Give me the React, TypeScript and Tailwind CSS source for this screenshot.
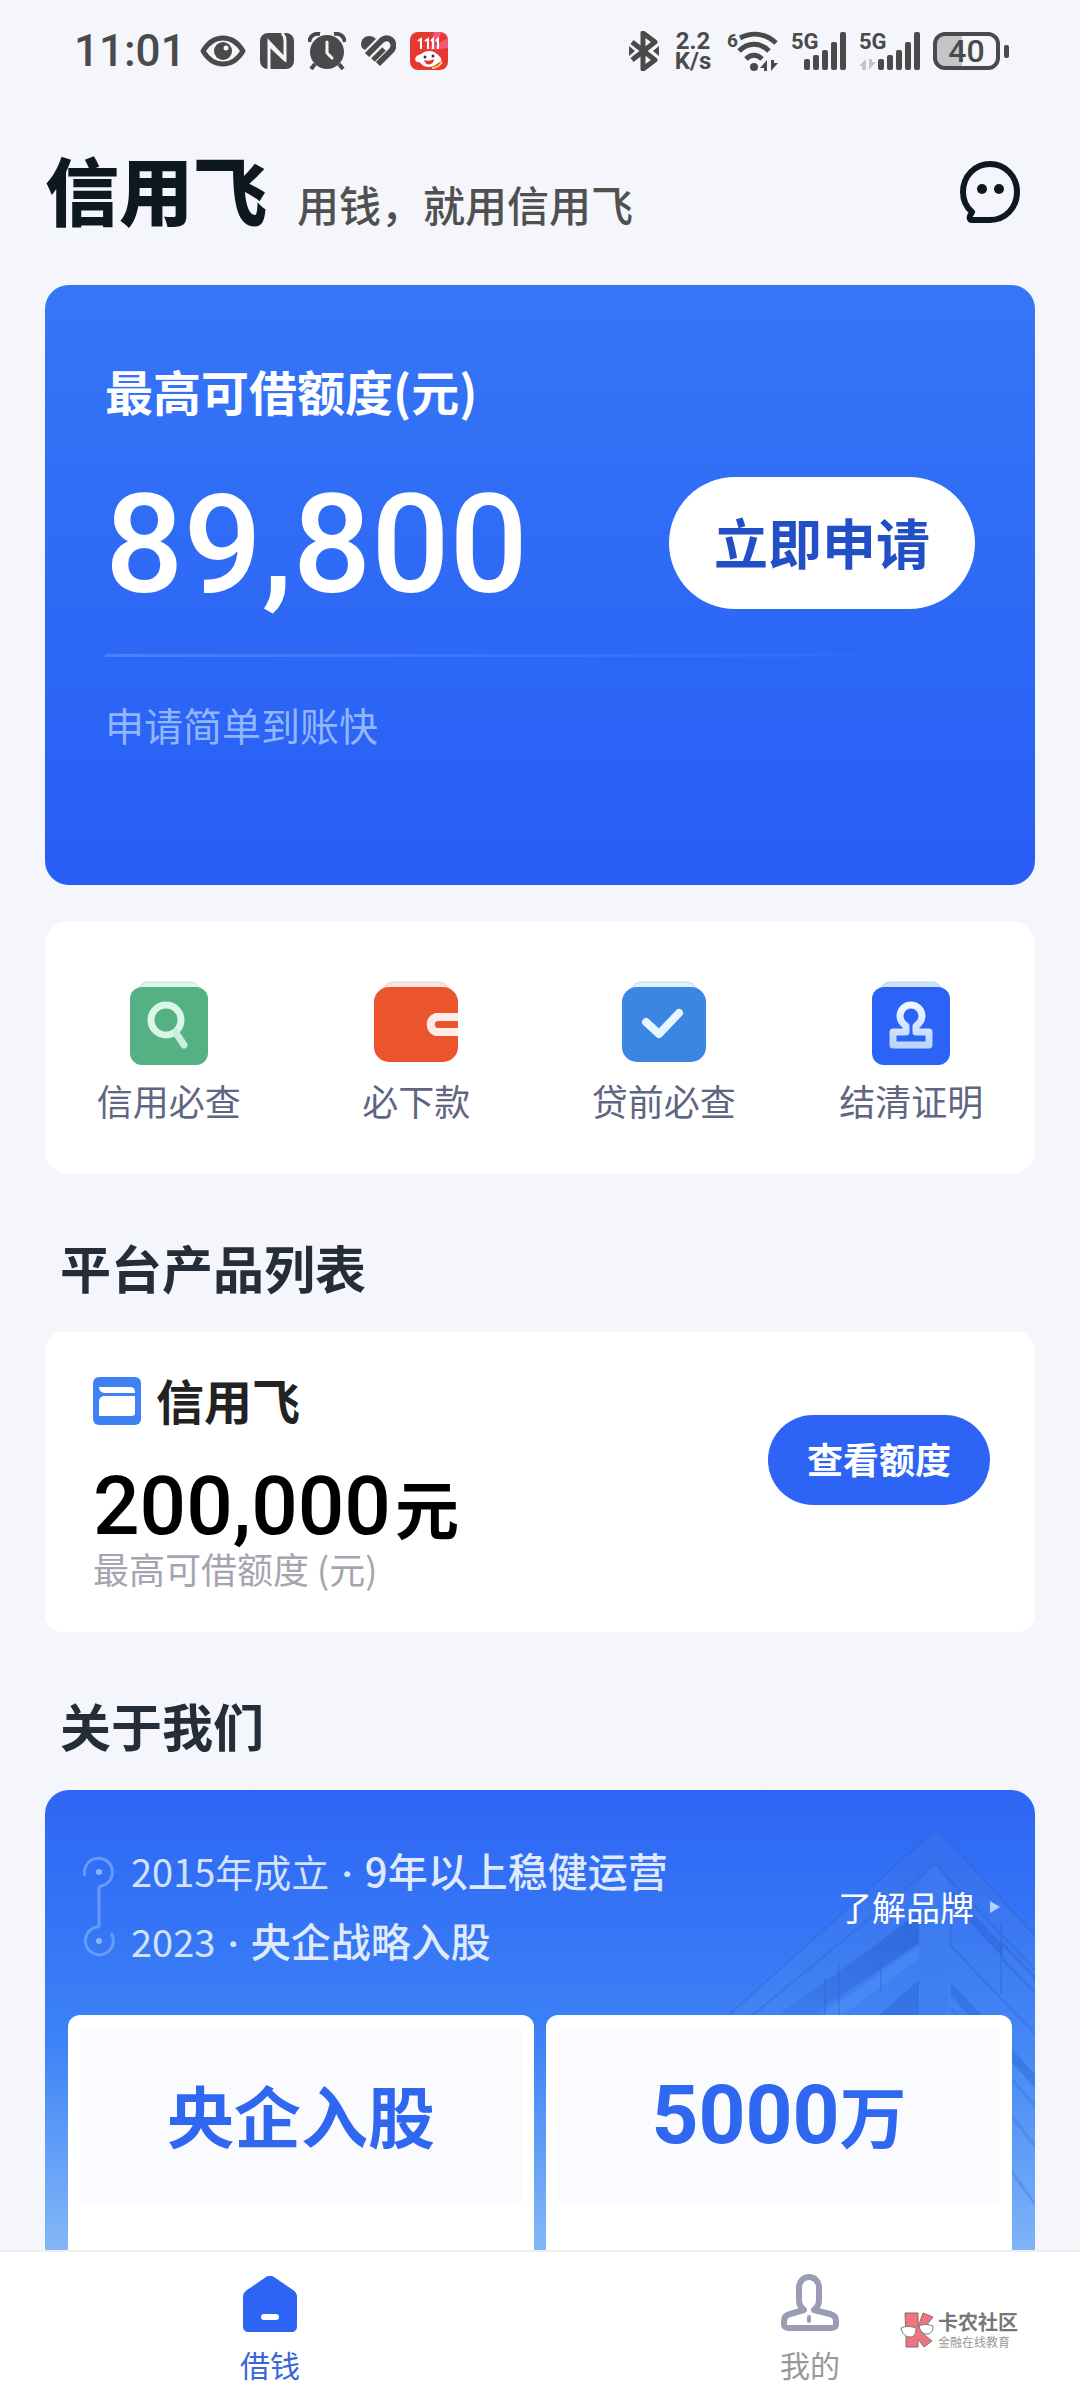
import React from 'react';

type IconProps = { className?: string };

/* ---------- status bar ---------- */

function EyeIcon() {
  return (
    <svg width="46" height="34" viewBox="0 0 46 34" aria-hidden="true">
      <path d="M3 17C9 7 16 4 23 4s14 3 20 13c-6 10-13 13-20 13S9 27 3 17Z" fill="none" stroke="#4a4a4a" strokeWidth="5" strokeLinejoin="round" />
      <circle cx="23" cy="17" r="9" fill="#4a4a4a" />
      <circle cx="26" cy="14" r="2.5" fill="#f4f6fb" />
    </svg>
  );
}

function NfcIcon() {
  return (
    <svg width="34" height="36" viewBox="0 0 34 36" aria-hidden="true">
      <rect width="34" height="36" rx="8" fill="#4a4a4a" />
      <path d="M9 36V9l16 17V8c0-4-1-6-3-8" fill="none" stroke="#f4f6fb" strokeWidth="3" />
      <path d="M9 9 25 26v3L9 14Z" fill="#f4f6fb" />
    </svg>
  );
}

function AlarmIcon() {
  return (
    <svg width="38" height="38" viewBox="0 0 38 38" aria-hidden="true">
      <circle cx="19" cy="20" r="17" fill="#4a4a4a" />
      <path d="M1 10C2 4 6 1 12 2M37 10c-1-6-5-9-11-8" fill="none" stroke="#4a4a4a" strokeWidth="4" />
      <path d="m7 32-4 5M31 32l4 5" stroke="#4a4a4a" strokeWidth="4" />
      <path d="M19 10v11l5 5" fill="none" stroke="#f4f6fb" strokeWidth="3" strokeLinecap="round" />
    </svg>
  );
}

function HealthIcon() {
  return (
    <svg width="36" height="32" viewBox="0 0 36 32" aria-hidden="true">
      <path d="M2 13C-1 6 4 1 9 1c3 0 5 1 7 3L5 15Z" fill="#4a4a4a" />
      <path d="M7 20 21 6c4-4 9-3 11 0s2 7-1 10L18 29" fill="none" stroke="#4a4a4a" strokeWidth="6" />
      <path d="M13 25 24 14" stroke="#4a4a4a" strokeWidth="5" />
    </svg>
  );
}

function ShopIcon() {
  return (
    <svg width="38" height="38" viewBox="0 0 38 38" aria-hidden="true">
      <rect width="38" height="38" rx="8" fill="#e5392f" />
      <path d="M24 0h8l-8 14 14-8v10L20 18Z" fill="#f2597c" />
      <path d="M8 9l3-2v10M15 9l3-2v10M21 9l2-2v10M26 9l2-2v10" fill="none" stroke="#fff" strokeWidth="2" />
      <path d="M11 22c5-4 12-4 16 0 4 3 6 7 3 8-3 1-5 5-11 5s-7-3-10-5c-3 1-5-3-3-5 1-2 3-2 5-3Z" fill="#fff" />
      <path d="M14 28c4 1 7 1 10-1 0 6-8 8-10 1Z" fill="#d33" />
      <circle cx="15" cy="25" r="1.500" fill="#333" />
      <circle cx="23" cy="24" r="1.500" fill="#333" />
      <path d="M22 36c5 0 8-3 10-6" stroke="#f7d774" strokeWidth="2" fill="none" />
    </svg>
  );
}

function BluetoothIcon() {
  return (
    <svg width="30" height="40" viewBox="0 0 30 40" aria-hidden="true">
      <path d="m3 11 23 18-12 9V2l12 9L3 29" fill="none" stroke="#4a4a4a" strokeWidth="5" strokeLinejoin="round" />
      <path d="m0 15 6 5-6 5ZM30 15l-6 5 6 5Z" fill="#4a4a4a" />
    </svg>
  );
}

function WifiIcon() {
  return (
    <svg width="52" height="42" viewBox="0 0 52 42" aria-hidden="true">
      <text x="0" y="17" fontSize="19" fontWeight="700" fontFamily="Roboto, sans-serif" fill="#4a4a4a">6</text>
      <g fill="none" stroke="#4a4a4a" strokeWidth="5">
        <path d="M13 8c12-6 25-5 36 5" />
        <path d="M12 21c9-9 21-9 30 0" />
        <path d="M19 29c5-5 11-5 16 0" />
      </g>
      <circle cx="27" cy="37" r="4" fill="#4a4a4a" />
      <path d="M40 41V30l-7 8h4v3ZM44 30v11l7-8h-4v-3Z" fill="#4a4a4a" />
    </svg>
  );
}

function SignalIcon({ idle }: { idle?: boolean }) {
  const first = idle ? 19 : 13;
  return (
    <svg width={idle ? 62 : 56} height="48" viewBox={idle ? '0 -4 62 48' : '0 -4 56 48'} aria-hidden="true">
      <text x="0" y="18" fontSize="22" fontWeight="700" fontFamily="Roboto, sans-serif" fill="#4a4a4a">5G</text>
      {[27, 23, 18, 10, 0].map((y, i) => (
        <rect key={y} x={first + i * 9} y={y + 1} width="6" height={38 - y} rx="2" fill="#4a4a4a" />
      ))}
      {idle && <path d="M7 39V28l-7 7h3v4ZM10 28v11l7-8h-4v-3Z" fill="#c4c5c9" />}
    </svg>
  );
}

function Battery() {
  return (
    <div className="flex items-center gap-1">
      <div className="flex h-[38px] w-[67px] items-center justify-center rounded-[12px] border-[4px] border-[#4a4a4a] bg-linear-to-r from-[#c4c5c8] from-42% to-[#f4f6fb] to-42% text-[32px] leading-[32px] font-medium">
        40
      </div>
      <div className="h-[13px] w-[5px] rounded-[2px] bg-[#4a4a4a]" />
    </div>
  );
}

function StatusBar() {
  return (
    <div className="flex h-[102px] shrink-0 items-center justify-between pr-[71px] pl-[74px] font-[Roboto] text-[#4a4a4a]">
      <div className="flex items-center gap-[14px]">
        <span className="text-[44px] leading-[44px] font-medium">11:01</span>
        <EyeIcon />
        <NfcIcon />
        <AlarmIcon />
        <HealthIcon />
        <ShopIcon />
      </div>
      <div className="flex items-center gap-3">
        <BluetoothIcon />
        <div className="w-[44px] text-center text-[24px] leading-[20px] font-bold">
          <div>2.2</div>
          <div>K/s</div>
        </div>
        <WifiIcon />
        <SignalIcon />
        <SignalIcon idle />
        <Battery />
      </div>
    </div>
  );
}

/* ---------- page icons ---------- */

function ChatIcon() {
  return (
    <svg width="60" height="62" viewBox="0 0 60 62" aria-hidden="true">
      <path d="M12 51C5 45 3 38 3 31 3 15 15 3 30 3s27 12 27 28-12 28-27 28H12c-3 0-3-4-1-6" fill="none" stroke="#0e1820" strokeWidth="6" strokeLinecap="round" strokeLinejoin="round" />
      <circle cx="22" cy="28" r="5" fill="#0e1820" />
      <circle cx="39" cy="28" r="5" fill="#0e1820" />
    </svg>
  );
}

function SearchTile() {
  return (
    <svg width="84" height="84" viewBox="0 0 84 84" aria-hidden="true">
      <path d="M12 7c2-4 5-6 9-6h42c4 0 7 2 9 6" fill="#e0f6ec" stroke="#bfe3d2" />
      <rect x="3" y="6" width="78" height="78" rx="12" fill="#54b183" />
      <circle cx="39" cy="39" r="15" fill="none" stroke="#d8f7e7" strokeWidth="7" />
      <path d="m49 52 8 12" stroke="#c6f0da" strokeWidth="7" strokeLinecap="round" />
    </svg>
  );
}

function WalletTile() {
  return (
    <svg width="84" height="84" viewBox="0 0 84 84" aria-hidden="true">
      <path d="M10 7c2-4 5-6 9-6h46c4 0 7 2 9 6" fill="#fde6df" stroke="#e9cfd0" />
      <rect y="6" width="84" height="75" rx="15" fill="#eb552e" />
      <path d="M84 36H62a8 8 0 0 0 0 15h22" fill="none" stroke="#fdebe6" strokeWidth="8" />
    </svg>
  );
}

function CheckTile() {
  return (
    <svg width="84" height="84" viewBox="0 0 84 84" aria-hidden="true">
      <path d="M10 7c2-4 5-6 9-6h46c4 0 7 2 9 6" fill="#e0f1fb" stroke="#bcd9ea" />
      <rect y="6" width="84" height="75" rx="15" fill="#3a86e2" />
      <path d="m24 41 13 12 20-21" fill="none" stroke="#e6f6ff" strokeWidth="8" strokeLinecap="round" strokeLinejoin="round" />
    </svg>
  );
}

function StampTile() {
  return (
    <svg width="84" height="84" viewBox="0 0 84 84" aria-hidden="true">
      <defs>
        <linearGradient id="stamp" x1="0" y1="0" x2="0" y2="1">
          <stop offset="0" stopColor="#eef7ff" />
          <stop offset="1" stopColor="#b9d6fd" />
        </linearGradient>
      </defs>
      <path d="M12 7c2-4 5-6 9-6h42c4 0 7 2 9 6" fill="#cfe2fb" stroke="#bcd0ea" />
      <rect x="3" y="6" width="78" height="78" rx="12" fill="#2a63f6" />
      <path d="M37 51v-6c-4-3-6-6-6-10a11 11 0 0 1 22 0c0 4-2 7-6 10v6h13v13H24V51Z" fill="none" stroke="url(#stamp)" strokeWidth="7" strokeLinejoin="round" />
    </svg>
  );
}

function ProductIcon() {
  return (
    <svg width="48" height="48" viewBox="0 0 48 48" aria-hidden="true">
      <rect width="48" height="48" rx="6" fill="#4080f5" />
      <path d="M6 10h31c4 0 5 2 5 6H12c-4 0-6-3-6-6Z" fill="#fff" />
      <path d="M12 19h30v17c0 2-1 3-3 3H6V25c0-4 2-6 6-6Z" fill="#fff" />
    </svg>
  );
}

function TimelineIcon() {
  return (
    <svg width="32" height="102" viewBox="0 0 32 102" aria-hidden="true">
      <path d="M2 20A14 14 0 1 1 18 30q-2 0-2 3v35q0 3-2 3A14 14 0 1 0 28 77" fill="none" stroke="#669bfb" strokeWidth="3" />
      <circle cx="16" cy="16" r="3" fill="#8fb5fc" />
      <circle cx="16" cy="85" r="3" fill="#8fb5fc" />
    </svg>
  );
}

function Building({ className }: IconProps) {
  return (
    <svg className={className} width="306" height="422" viewBox="0 0 306 422" aria-hidden="true">
      <defs>
        <linearGradient id="face" x1="0" y1="0" x2="0" y2="1">
          <stop offset="0" stopColor="#3a6fe6" stopOpacity="0.45" />
          <stop offset="0.5" stopColor="#4a8bf3" stopOpacity="0.5" />
          <stop offset="1" stopColor="#6aa7f7" stopOpacity="0.2" />
        </linearGradient>
        <linearGradient id="beam" x1="0" y1="1" x2="1" y2="0">
          <stop offset="0" stopColor="#265dcb" stopOpacity="0.15" />
          <stop offset="1" stopColor="#265dcb" stopOpacity="0.55" />
        </linearGradient>
      </defs>
      <path d="M208 0 0 187v235h306V108Z" fill="url(#face)" />
      <path d="m190 84-58 44-84 59h36l106-72Z" fill="url(#beam)" />
      <path d="m190 118-98 69h22l76-56Z" fill="#5594fa" fillOpacity="0.4" />
      <path d="m190 152-40 35h40Z" fill="#265dcb" fillOpacity="0.4" />
      <path d="M192 50l14-14 12 14v137h-26Z" fill="#3f7df0" fillOpacity="0.6" />
      <path d="M222 62 306 152v12l-84-90ZM222 154l84 92v14l-84-92ZM274 134l32 32v-18l-32-34Z" fill="#265dcb" fillOpacity="0.35" />
      <path d="m222 180 84 98M222 210l84 108M222 260l84 116" stroke="#2c64d6" strokeOpacity="0.25" strokeWidth="3" />
      <path d="M208 0 0 187M208 0l98 108M206 36 24 187M206 36l100 106M222 118l84 88M110 134v53M152 134v30M96 150v37M272 96v70M222 68v50" fill="none" stroke="#2a60d0" strokeOpacity="0.35" strokeWidth="2" />
    </svg>
  );
}

function HomeIcon() {
  return (
    <svg width="54" height="56" viewBox="0 0 54 56" aria-hidden="true">
      <path d="M23 1c3-2 5-2 8 0l19 13c3 2 4 4 4 7v29c0 4-2 6-6 6H6c-4 0-6-2-6-6V21c0-3 1-5 4-7Z" fill="#2d64f5" />
      <rect x="18" y="38" width="18" height="6" rx="3" fill="#fff" />
    </svg>
  );
}

function PersonIcon() {
  return (
    <svg width="58" height="58" viewBox="0 0 58 58" aria-hidden="true">
      <path d="M23 36c-4-3-5-6-5-10V14C18 7 23 3 28 3s10 4 10 11v12c0 4-1 7-5 10l16 4c4 1 6 3 6 7v3c0 3-2 4-5 4H8c-3 0-5-1-5-4v-3c0-4 2-6 6-7Z" fill="none" stroke="#9a9bb4" strokeWidth="6" strokeLinejoin="round" />
      <path d="M28 43v4" stroke="#9a9bb4" strokeWidth="4" strokeLinecap="round" />
    </svg>
  );
}

function CommunityMark() {
  return (
    <svg width="34" height="36" viewBox="0 0 34 36" aria-hidden="true">
      <path d="M5 1h13v14l5-14 10 4-12 15 11 9-8 6-6-8v8H6V24L5 1Z" fill="#f07481" stroke="#8a6a70" />
      <path d="M1 16c4-2 10-2 15 0 0 6-2 9-6 9s-8-3-9-9ZM19 14c4-2 9-2 14 0 0 6-3 8-6 8s-7-2-8-8Z" fill="#fff" stroke="#777" />
    </svg>
  );
}

/* ---------- page ---------- */

const services = [
  { label: '信用必查', icon: <SearchTile /> },
  { label: '必下款', icon: <WalletTile /> },
  { label: '贷前必查', icon: <CheckTile /> },
  { label: '结清证明', icon: <StampTile /> },
];

function SectionTitle({ children }: { children: React.ReactNode }) {
  return <h2 className="px-[15px] text-[51px] leading-[60px] font-bold text-[#252d38]">{children}</h2>;
}

function Milestone({ when, what }: { when: string; what: string }) {
  return (
    <p className="flex h-[70px] items-baseline gap-3">
      {when}
      <span className="font-[Roboto] font-bold">·</span>
      <strong className="text-[40px] font-medium text-[#dfeafe]">{what}</strong>
    </p>
  );
}

function Highlight({ children }: { children: React.ReactNode }) {
  return (
    <div className="flex flex-1 flex-col rounded-t-[12px] bg-white p-3 pb-0">
      <div className="flex h-[178px] items-center justify-center bg-[#f9fbff] pb-1 text-[67px] leading-[80px] font-bold text-[#2f67f0]">
        <p>{children}</p>
      </div>
    </div>
  );
}

export default function App() {
  return (
    <div className="flex h-screen flex-col bg-[#f4f6fb] font-['Noto_Sans_CJK_SC',sans-serif]">
      <StatusBar />

      <main className="flex min-h-0 flex-1 flex-col overflow-y-auto px-[45px]">
        <header className="flex h-[183px] shrink-0 items-center justify-between pr-[15px] pb-1">
          <div className="flex items-end gap-[30px] pb-2">
            <h1 className="text-[74px] leading-[74px] font-black text-[#0e1820]">信用飞</h1>
            <p className="text-[42px] leading-[42px] font-medium text-[#505050]">用钱，就用信用飞</p>
          </div>
          <button type="button" aria-label="客服">
            <ChatIcon />
          </button>
        </header>

        <section className="h-[600px] shrink-0 rounded-[24px] bg-linear-to-b from-[#3676f6] to-[#285df6] px-[60px] pt-[75px] text-white">
          <h2 className="text-[48px] leading-[60px] font-bold">最高可借额度(元)</h2>
          <div className="mt-[57px] flex items-center justify-between">
            <div className="pt-1 font-[Roboto] text-[138px] leading-[128px] font-medium">89,800</div>
            <button type="button" className="h-[132px] w-[306px] rounded-full bg-white pb-1 text-[54px] font-bold text-[#234fc6]">
              立即申请
            </button>
          </div>
          <div className="mt-[45px] h-[3px] bg-linear-to-r from-[#4a80fb] to-transparent" />
          <p className="mt-[42px] text-[39px] leading-[50px] text-[#92b6fd]">申请简单到账快</p>
        </section>

        <section className="mt-9 grid shrink-0 grid-cols-4 rounded-[24px] bg-white pt-[60px] pb-[49px]">
          {services.map((s) => (
            <button key={s.label} type="button" className="flex flex-col items-center gap-2.5 text-[36px] leading-[50px] text-[#5f6582]">
              {s.icon}
              {s.label}
            </button>
          ))}
        </section>

        <div className="mt-[63px] mb-[35px]">
          <SectionTitle>平台产品列表</SectionTitle>
        </div>
        <section className="flex h-[300px] shrink-0 items-start justify-between rounded-[18px] bg-white pt-[38px] pr-[45px] pl-12">
          <div>
            <div className="flex items-center gap-[15px]">
              <ProductIcon />
              <h3 className="pb-1 text-[48px] leading-[58px] font-bold text-[#222]">信用飞</h3>
            </div>
            <div className="mt-9 flex items-baseline gap-1 leading-[76px] text-black">
              <span className="font-[Roboto] text-[82px] font-medium">200,000</span>
              <span className="text-[64px] font-bold">元</span>
            </div>
            <p className="text-[36px] leading-[48px] text-[#a5a5b2]">最高可借额度 (元)</p>
          </div>
          <button type="button" className="mt-[45px] h-[90px] w-[222px] rounded-full bg-[#2d64f5] pb-1 text-[36px] font-bold text-white">
            查看额度
          </button>
        </section>

        <div className="mt-[63px] mb-[35px]">
          <SectionTitle>关于我们</SectionTitle>
        </div>
        <section className="relative flex flex-1 flex-col overflow-hidden rounded-t-[24px] bg-linear-to-b from-[#2e65f5] via-[#3d82f6] via-55% to-[#84b7f7] px-[23px]">
          <Building className="absolute top-[38px] right-0" />
          <div className="relative flex h-[225px] shrink-0 items-center justify-between pt-2 pr-3 pl-[15px]">
            <div className="flex items-center gap-4">
              <TimelineIcon />
              <div className="text-[38px] leading-[66px] text-[#d3e2fd]">
                <Milestone when="2015年成立" what="9年以上稳健运营" />
                <Milestone when="2023" what="央企战略入股" />
              </div>
            </div>
            <a href="#brand" className="flex items-center gap-4 text-[34px] leading-[50px] text-white">
              了解品牌
              <svg width="10" height="12" viewBox="0 0 10 12" aria-hidden="true">
                <path d="M0 0 10 6 0 12Z" fill="#b5d0fd" />
              </svg>
            </a>
          </div>
          <div className="relative flex flex-1 gap-3">
            <Highlight>央企入股</Highlight>
            <Highlight>
              <span className="font-[Roboto] text-[82px]">5000</span>万
            </Highlight>
          </div>
        </section>
      </main>

      <nav className="relative grid h-[150px] shrink-0 grid-cols-2 border-t-2 border-[#eeeeef] bg-white text-[30px] leading-[44px]">
        <a href="#loan" className="flex flex-col items-center justify-end gap-2.5 pb-3.5 text-[#3a66dc]">
          <HomeIcon />
          借钱
        </a>
        <a href="#me" className="flex flex-col items-center justify-end gap-2.5 pb-3.5 text-[#999]">
          <PersonIcon />
          我的
        </a>
        <div className="absolute right-[62px] bottom-[52px] flex items-center gap-1 text-[#777]">
          <CommunityMark />
          <div className="flex flex-col gap-1">
            <div className="text-[20px] leading-[20px] font-bold">卡农社区</div>
            <div className="text-[12px] leading-[12px] text-[#999]">金融在线教育</div>
          </div>
        </div>
      </nav>
    </div>
  );
}
